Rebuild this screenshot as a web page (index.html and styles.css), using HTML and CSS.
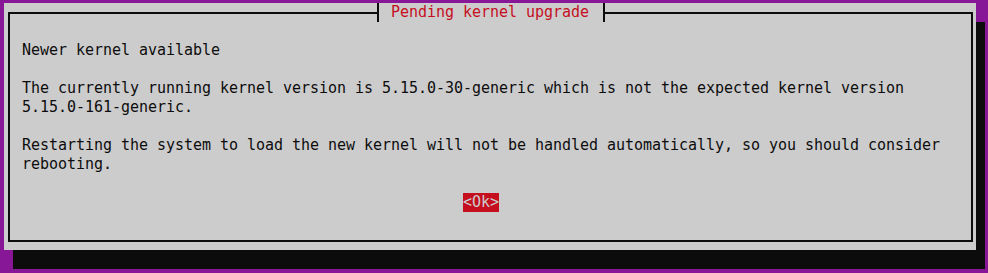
FILE: index.html
```html
<!DOCTYPE html>
<html>
<head>
<meta charset="utf-8">
<link rel="stylesheet" href="styles.css">
</head>
<body>
<div class="dialog">
  <div class="frame">
    <div class="title">Pending kernel upgrade</div>
    <div class="content">
      <div class="para">Newer kernel available</div>
      <div class="para">The currently running kernel version is 5.15.0-30-generic which is not the expected kernel version
5.15.0-161-generic.</div>
      <div class="para">Restarting the system to load the new kernel will not be handled automatically, so you should consider
rebooting.</div>
      <div class="buttons"><span class="ok">&lt;Ok&gt;</span></div>
    </div>
  </div>
</div>
</body>
</html>
```

FILE: styles.css
```css
html, body {
  margin: 0;
  padding: 0;
}
body {
  background: #881798;
  width: 988px;
  height: 273px;
  overflow: hidden;
  font-family: "DejaVu Sans Mono", monospace;
  font-size: 15px;
  letter-spacing: -0.03px;
  line-height: 19px;
  color: #0c0c0c;
}
.dialog {
  margin: 3px 0 0 4px;
  width: 972px;
  height: 247px;
  background: #cccccc;
  box-shadow: 9px 19px 0 #0c0c0c;
  position: relative;
  box-sizing: border-box;
  padding-top: 9px;
}
.frame {
  margin: 0 3px 0 4px;
  height: 230px;
  border: 2px solid #0c0c0c;
  box-sizing: border-box;
}
.title {
  position: absolute;
  top: 0;
  left: 373px;
  height: 19px;
  width: 228px;
  box-sizing: border-box;
  border-left: 2px solid #0c0c0c;
  border-right: 2px solid #0c0c0c;
  background: #cccccc;
  padding-left: 12px;
  color: #c50f1f;
  white-space: pre;
}
.content {
  padding: 27px 0 0 12px;
  display: flex;
  flex-direction: column;
  gap: 19px;
}
.para {
  white-space: pre;
}
.buttons {
  padding-left: 441px;
  height: 19px;
}
.ok {
  display: inline-block;
  background: #c50f1f;
  color: #cccccc;
  height: 19px;
}
```
